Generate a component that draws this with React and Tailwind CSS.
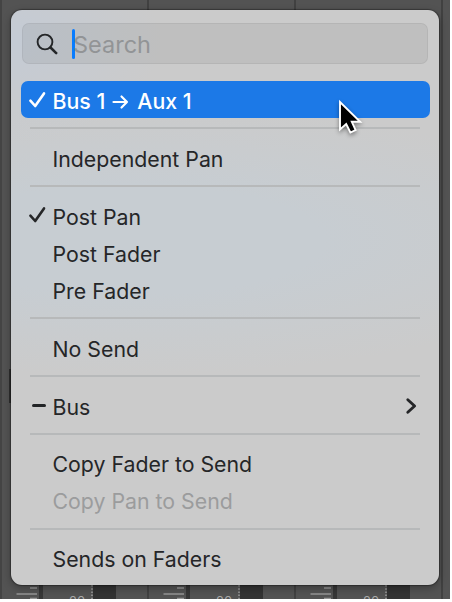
import React from 'react';

function Check() {
  return (
    <svg className="-ml-[2px]" width="20" height="20" viewBox="0 0 20 20" fill="none" stroke="currentColor" strokeWidth="2.6" strokeLinecap="round" strokeLinejoin="round">
      <path d="M2.4 10.6 7.2 16 16 3.400" />
    </svg>
  );
}

function Dash() {
  return <div className="ml-[2px] mt-px h-[3px] w-[14px] rounded-sm bg-[#222426]" />;
}

function Row({ label, mark, selected, disabled, submenu }) {
  const color = selected ? 'bg-[#1c79e7] font-medium text-white' : disabled ? 'text-[#9b9c9d]' : 'text-[#252628]';
  return (
    <div className={`mx-[9.5px] flex h-[37.3px] shrink-0 items-center rounded-[7px] pl-[9px] pr-[13px] ${color}`}>
      <div className="flex w-[23px] shrink-0 items-center">{mark}</div>
      <span className="whitespace-nowrap pt-[4px] text-[21.3px] leading-[37px]">{label}</span>
      {submenu && (
        <svg className="ml-auto mt-[2px]" width="12" height="18" viewBox="0 0 12 18" fill="none" stroke="currentColor" strokeWidth="2.9" strokeLinecap="round" strokeLinejoin="round">
          <path d="M2.8 2.8 9.6 9 2.8 15.2" />
        </svg>
      )}
    </div>
  );
}

function Separator() {
  return (
    <div className="mx-[19px] flex h-[20.4px] shrink-0 items-center">
      <div className="h-[2px] w-full bg-[#b7b9ba]" />
    </div>
  );
}

function Arrow() {
  return (
    <svg className="ml-[7px] mr-[8px] inline-block align-[-1px]" width="17" height="16" viewBox="0 0 17 16" fill="none" stroke="currentColor" strokeWidth="2.2" strokeLinecap="round" strokeLinejoin="round">
      <path d="M1.5 8H15M9.5 2.5 15 8 9.5 13.5" />
    </svg>
  );
}

function Strip() {
  return (
    <div className="relative h-full w-[147px] shrink-0 overflow-hidden border-r-2 border-[#414141]">
      <svg className="absolute bottom-0 left-0" width="147" height="15" viewBox="0 0 147 15">
        <path d="M28 4H35M14.500 10H35M28 14.500H35" stroke="#969696" strokeWidth="1.500" />
        <rect x="37" width="4" height="15" fill="#373737" />
        <rect x="91" width="23" height="15" fill="#333" />
        <path d="M90 1V15" stroke="#a0a0a0" strokeWidth="1.500" strokeDasharray="1.500 1.700" />
        <text x="67" y="21.500" fontFamily="Inter, sans-serif" fontSize="13" fill="#aaa">20</text>
      </svg>
    </div>
  );
}

export default function App() {
  return (
    <div className="h-[602px] w-[452px] overflow-hidden bg-white font-['Inter',sans-serif]">
      <div className="relative h-[599px] w-[450px] overflow-hidden bg-[#535353]">
        <div className="flex h-full border-l-2 border-[#444]">
          <Strip />
          <Strip />
          <Strip />
        </div>
        <div className="absolute left-[9px] top-[369px] h-[34px] w-[3px] bg-[#303030]" />
        <div className="absolute left-[11px] top-[10px] flex h-[575px] w-[428px] flex-col rounded-[11px] bg-[#cbcbcb] bg-[radial-gradient(ellipse_150px_100px_at_0_30px,#c4cbd5_0%,transparent_100%),radial-gradient(ellipse_480px_135px_at_120px_230px,#c7cdd2_40%,transparent_100%)] pt-[13px] shadow-[0_0_1px_1px_rgba(0,0,0,0.3),0_3px_8px_rgba(0,0,0,0.3)]">
          <div className="mx-[11px] mb-[17px] flex h-[41px] shrink-0 items-center rounded-[7px] border border-black/5 bg-black/6 pl-[13px]">
            <svg className="mt-[2px]" width="23" height="23" viewBox="0 0 23 23" fill="none" stroke="#242628" strokeLinecap="round">
              <circle cx="9" cy="9" r="7.400" strokeWidth="1.900" />
              <path d="M14.500 14.500 20.200 20.200" strokeWidth="2.500" />
            </svg>
            <div className="ml-[13px] h-[30px] w-[3px] rounded-sm bg-[#087cff]" />
            <span className="-ml-[2px] pt-[3px] text-[23.5px] text-[#929496]">Search</span>
          </div>
          <Row selected mark={<Check />} label={<>Bus 1<Arrow />Aux 1</>} />
          <Separator />
          <Row label="Independent Pan" />
          <Separator />
          <Row mark={<Check />} label="Post Pan" />
          <Row label="Post Fader" />
          <Row label="Pre Fader" />
          <Separator />
          <Row label="No Send" />
          <Separator />
          <Row mark={<Dash />} label="Bus" submenu />
          <Separator />
          <Row label="Copy Fader to Send" />
          <Row disabled label="Copy Pan to Send" />
          <Separator />
          <Row label="Sends on Faders" />
        </div>
        <svg className="absolute left-[335px] top-[97px] drop-shadow-[0_2px_2px_rgba(0,0,0,0.4)]" width="30" height="40" viewBox="0 0 30 40">
          <path d="M5 5V32.500L11.200 27 15.400 35.500 20.600 33 16.800 24.800H25.200Z" fill="#000" stroke="#fff" strokeWidth="1.900" />
        </svg>
      </div>
    </div>
  );
}
